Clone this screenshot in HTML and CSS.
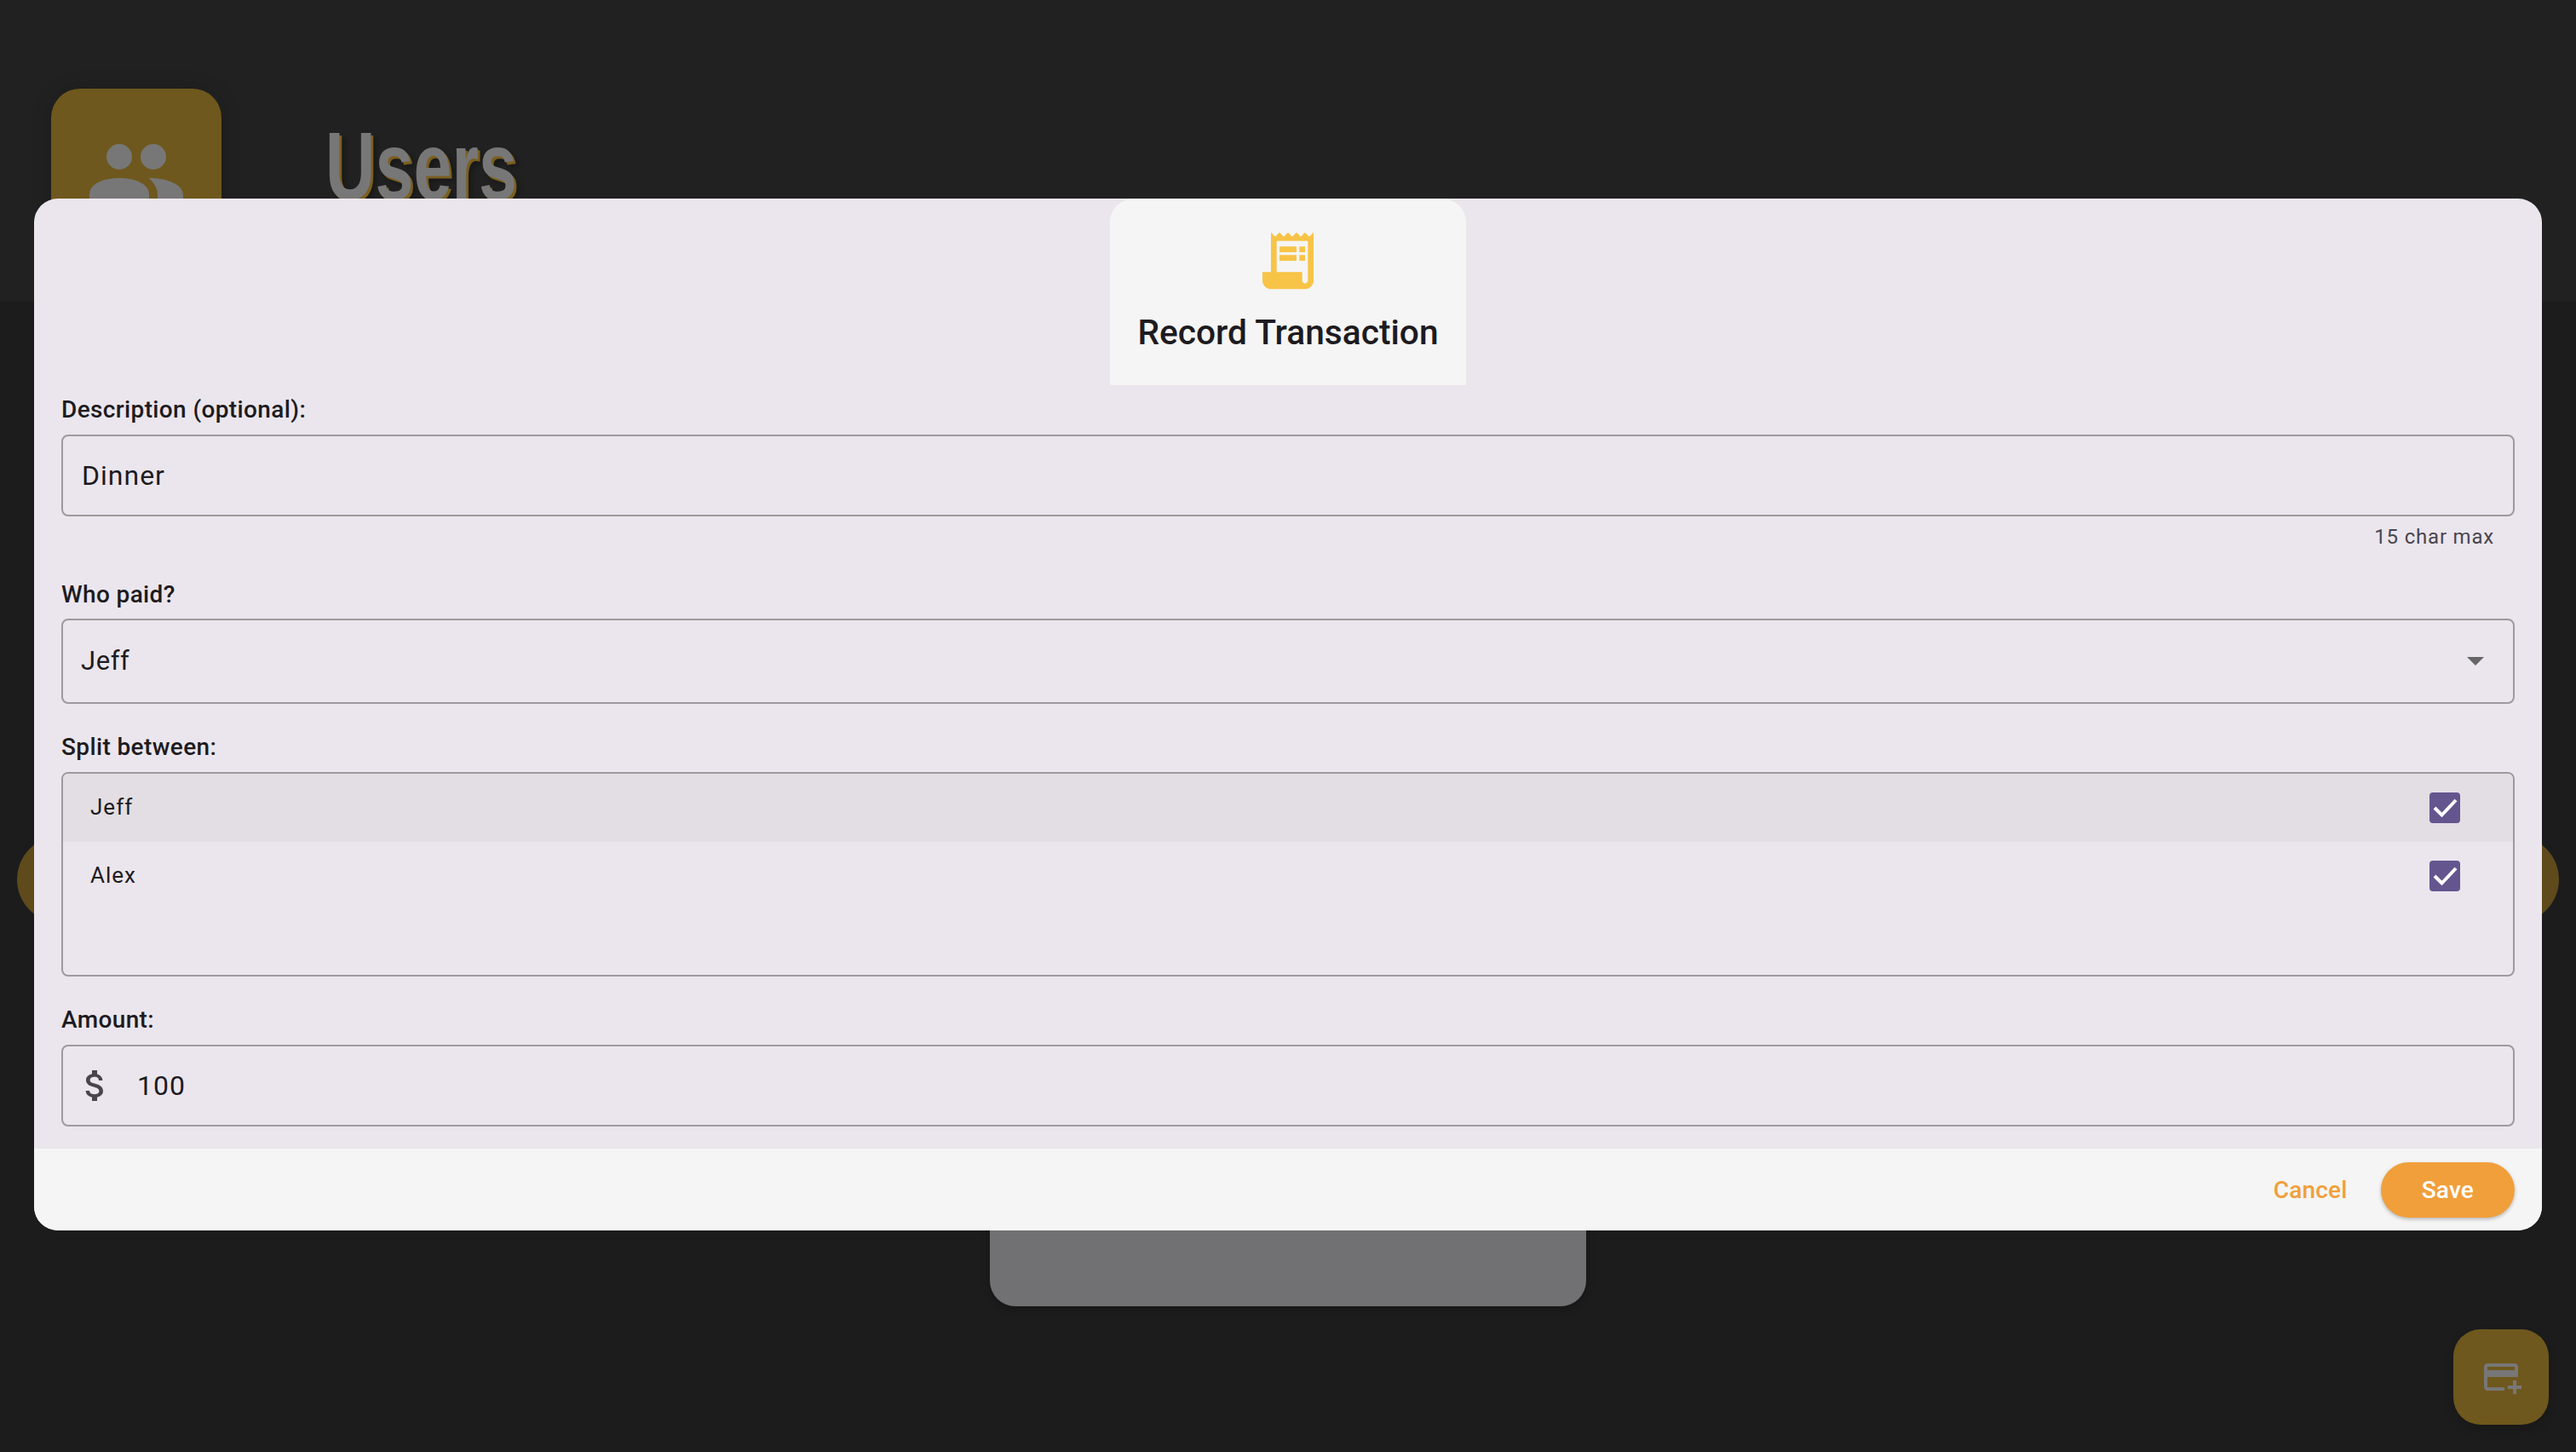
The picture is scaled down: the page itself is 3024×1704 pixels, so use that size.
FILE: index.html
```html
<!DOCTYPE html>
<html lang="en">
<head>
    <meta charset="UTF-8">
    <title>Users</title>
    <link rel="stylesheet" href="styles.css">
</head>
<body>
    <div class="page">
        <header class="appbar">
            <div class="appbar-tile">
                <svg class="users-icon" viewBox="0 0 110 90" width="110" height="90">
                    <circle cx="35" cy="15" r="15"/>
                    <circle cx="75" cy="15" r="15"/>
                    <path d="M0 81V59c0-12 16-19 35-19s35 7 35 19v22z"/>
                    <path d="M70 40c21 0 40 7 40 20v21H80V60c0-8-4-14-10-20z"/>
                </svg>
            </div>
            <h1 class="appbar-title">Users</h1>
        </header>

        <div class="round-btn round-left"></div>
        <div class="round-btn round-right"></div>
        <div class="bottom-card"></div>
        <div class="fab">
            <svg viewBox="0 0 24 24" width="48" height="48">
                <path d="M20 4H4c-1.110 0-1.990.890-1.990 2L2 18c0 1.110.890 2 2 2h10v-2H4v-6h18V6c0-1.110-.890-2-2-2zm0 4H4V6h16v2zm4 9v2h-3v3h-2v-3h-3v-2h3v-3h2v3h3z"/>
            </svg>
        </div>

        <div class="dialog">
            <div class="dialog-head">
                <svg class="receipt-icon" viewBox="0 0 24 24" width="80" height="80">
                    <path fill-rule="evenodd" d="M19.500 3.500L18 2l-1.500 1.500L15 2l-1.500 1.500L12 2l-1.500 1.500L9 2 7.500 3.500 6 2v14H3v3c0 1.660 1.340 3 3 3h12c1.660 0 3-1.340 3-3V2l-1.500 1.500zM19 19c0 .550-.450 1-1 1s-1-.450-1-1v-3H8V5h11v14z"/>
                    <path d="M9 7h6v2H9zM16 7h2v2h-2zM9 10h6v2H9zM16 10h2v2h-2z"/>
                </svg>
                <h2 class="dialog-title">Record Transaction</h2>
            </div>

            <div class="dialog-body">
                <label class="field-label">Description (optional):</label>
                <div class="box text-box"><span class="value value-desc">Dinner</span></div>
                <div class="helper">15 char max</div>

                <label class="field-label">Who paid?</label>
                <div class="box select-box">
                    <span class="value value-jeff">Jeff</span>
                    <span class="arrow"></span>
                </div>

                <label class="field-label label-gap">Split between:</label>
                <div class="box split-box">
                    <div class="split-row row-active">
                        <span class="split-name">Jeff</span>
                        <span class="check">
                            <svg viewBox="0 0 36 36" width="36" height="36"><path d="M6 18l8.500 8.500L31 9"/></svg>
                        </span>
                    </div>
                    <div class="split-row">
                        <span class="split-name">Alex</span>
                        <span class="check">
                            <svg viewBox="0 0 36 36" width="36" height="36"><path d="M6 18l8.500 8.500L31 9"/></svg>
                        </span>
                    </div>
                </div>

                <label class="field-label label-gap">Amount:</label>
                <div class="box text-box amount-box">
                    <svg class="dollar" viewBox="0 0 24 24" width="48" height="48">
                        <path d="M11.800 10.900c-2.270-.590-3-1.200-3-2.150 0-1.090 1.010-1.850 2.700-1.850 1.780 0 2.440.850 2.500 2.100h2.210c-.070-1.720-1.120-3.300-3.210-3.810V3h-3v2.160c-1.940.420-3.500 1.680-3.500 3.610 0 2.310 1.910 3.460 4.700 4.130 2.500.600 3 1.480 3 2.410 0 .690-.490 1.790-2.700 1.790-2.060 0-2.870-.920-2.980-2.100h-2.200c.120 2.190 1.760 3.420 3.680 3.830V21h3v-2.150c1.950-.370 3.500-1.500 3.500-3.550 0-2.840-2.430-3.810-4.700-4.400z"/>
                    </svg>
                    <span class="value">100</span>
                </div>
            </div>

            <div class="dialog-foot">
                <button class="btn btn-cancel">Cancel</button>
                <button class="btn btn-save">Save</button>
            </div>
        </div>
    </div>
</body>
</html>
```

FILE: styles.css
```css
* {
    box-sizing: border-box;
}
body {
    margin: 0;
    font-family: Roboto, "Liberation Sans", sans-serif;
    color: #1d1b20;
}
.page {
    position: relative;
    width: 3024px;
    height: 1704px;
    overflow: hidden;
    background: #1c1c1c;
}

/* things behind the dialog */
.appbar {
    display: flex;
    align-items: flex-start;
    height: 354px;
    padding: 104px 0 0 60px;
    background: #212121;
}
.appbar-tile {
    display: flex;
    justify-content: center;
    width: 200px;
    height: 200px;
    padding-top: 65px;
    border-radius: 34px;
    background: #6f581d;
    box-shadow: 0 0 24px rgba(0, 0, 0, 0.15);
}
.users-icon {
    fill: #777777;
}
.appbar-title {
    margin: 26px 0 0 122px;
    font-family: "Liberation Sans", sans-serif;
    font-size: 114px;
    font-weight: 700;
    line-height: 130px;
    color: #777777;
    text-shadow: 4px 3px 0 #7a5f20, 8px 6px 8px rgba(0, 0, 0, 0.3);
    transform: scaleX(0.71);
    transform-origin: left top;
}
.round-btn {
    position: absolute;
    top: 981px;
    width: 102px;
    height: 102px;
    border-radius: 50%;
    background: #5f4a1c;
}
.round-left {
    left: 20px;
}
.round-right {
    left: 2902px;
}
.bottom-card {
    position: absolute;
    left: 1162px;
    top: 1300px;
    width: 700px;
    height: 233px;
    border-radius: 30px;
    background: #717072;
    box-shadow: 0 4px 10px rgba(0, 0, 0, 0.2);
}
.fab {
    position: absolute;
    left: 2880px;
    top: 1560px;
    display: flex;
    align-items: center;
    justify-content: center;
    width: 112px;
    height: 112px;
    border-radius: 32px;
    background: #6f581d;
    box-shadow: 0 6px 12px rgba(0, 0, 0, 0.15);
}
.fab svg {
    fill: #777777;
}

/* dialog */
.dialog {
    position: absolute;
    left: 40px;
    top: 233px;
    display: flex;
    flex-direction: column;
    width: 2944px;
    height: 1211px;
    overflow: hidden;
    border-radius: 28px;
    background: #ebe6ed;
}
.dialog-head {
    display: flex;
    flex-direction: column;
    align-items: center;
    align-self: center;
    width: 418px;
    height: 219px;
    padding-top: 33px;
    border-radius: 28px 28px 0 0;
    background: #f5f5f5;
}
.receipt-icon {
    fill: #f8c447;
}
.dialog-title {
    margin: 16px 0 0;
    font-size: 40.700px;
    font-weight: 500;
    line-height: 56px;
    white-space: nowrap;
}
.dialog-body {
    flex: 1;
    padding: 8px 32px 0;
}
.field-label {
    display: block;
    height: 40px;
    margin-bottom: 10px;
    font-size: 28px;
    font-weight: 500;
    line-height: 41px;
    letter-spacing: 0.37px;
}
.label-gap {
    margin-top: 31px;
    margin-bottom: 9px;
    line-height: 40px;
}
.box {
    border: 2px solid #9c9a9e;
    border-radius: 8px;
}
.text-box {
    display: flex;
    align-items: center;
    height: 96px;
    padding-left: 22px;
}
.value {
    margin-top: -1px;
    font-size: 32px;
    letter-spacing: 1px;
}
.value-jeff {
    font-size: 31px;
    letter-spacing: 0.6px;
}
.helper {
    height: 71px;
    padding: 12px 24px 0 0;
    font-size: 24px;
    line-height: 24px;
    letter-spacing: 0.8px;
    text-align: right;
    color: #49454f;
}
.helper + .field-label {
    margin-bottom: 9px;
}
.select-box {
    display: flex;
    align-items: center;
    justify-content: space-between;
    height: 100px;
    padding: 0 34px 0 21px;
}
.arrow {
    width: 0;
    height: 0;
    border-top: 10px solid #666666;
    border-left: 10px solid transparent;
    border-right: 10px solid transparent;
}
.split-box {
    height: 240px;
    overflow: hidden;
}
.split-row {
    display: flex;
    align-items: center;
    justify-content: space-between;
    height: 80px;
    padding: 0 62px 0 32px;
}
.row-active {
    background: #e2dee3;
}
.split-name {
    font-size: 26px;
    letter-spacing: 1px;
    margin-top: -2px;
}
.check {
    display: block;
    width: 36px;
    height: 36px;
    border-radius: 4px;
    background: #65558f;
}
.check svg {
    display: block;
    fill: none;
    stroke: #ffffff;
    stroke-width: 4;
}
.amount-box {
    padding-left: 14px;
}
.dollar {
    fill: #49454f;
    margin-right: 25px;
}
.dialog-foot {
    display: flex;
    align-items: center;
    justify-content: flex-end;
    gap: 15px;
    height: 96px;
    padding: 0 32px;
    background: #f5f5f5;
}
.btn {
    height: 65px;
    padding: 0 48px;
    border: 0;
    border-radius: 33px;
    font-family: Roboto, sans-serif;
    font-size: 28px;
    font-weight: 500;
    letter-spacing: 0.2px;
}
.btn-cancel {
    padding: 0 24px;
    background: transparent;
    color: #f19f3b;
}
.btn-save {
    background: #f19f3b;
    color: #ffffff;
    box-shadow: 0 2px 4px rgba(0, 0, 0, 0.25);
}
```
